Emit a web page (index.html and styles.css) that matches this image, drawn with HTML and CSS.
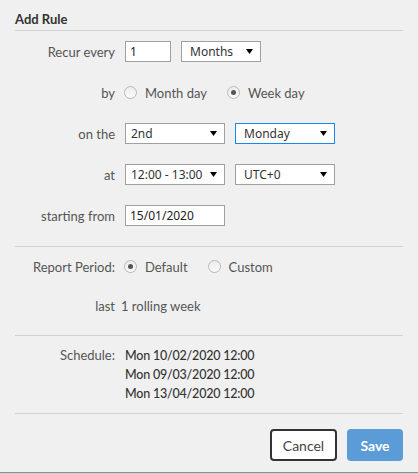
FILE: index.html
```html
<!DOCTYPE html>
<html>
<head>
<meta charset="utf-8">
<link rel="stylesheet" href="styles.css">
</head>
<body>
<div class="dialog">
  <div class="title">Add Rule</div>

  <div class="section recur">
    <div class="row">
      <div class="label">Recur every</div>
      <div class="controls">
        <div class="input small">1</div>
        <div class="select months"><span>Months</span><svg class="arrow" width="7" height="5" viewBox="0 0 7 5"><path d="M0 0H7L3.5 5Z" fill="#000"/></svg></div>
      </div>
    </div>
    <div class="row">
      <div class="label">by</div>
      <div class="controls radios">
        <label class="radio"><span class="dot"></span>Month day</label>
        <label class="radio checked"><span class="dot"></span>Week day</label>
      </div>
    </div>
    <div class="row">
      <div class="label">on the</div>
      <div class="controls">
        <div class="select wide"><span>2nd</span><svg class="arrow" width="7" height="5" viewBox="0 0 7 5"><path d="M0 0H7L3.5 5Z" fill="#000"/></svg></div>
        <div class="select wide focus"><span>Monday</span><svg class="arrow" width="7" height="5" viewBox="0 0 7 5"><path d="M0 0H7L3.5 5Z" fill="#000"/></svg></div>
      </div>
    </div>
    <div class="row">
      <div class="label">at</div>
      <div class="controls">
        <div class="select wide"><span>12:00 - 13:00</span><svg class="arrow" width="7" height="5" viewBox="0 0 7 5"><path d="M0 0H7L3.5 5Z" fill="#000"/></svg></div>
        <div class="select wide"><span>UTC+0</span><svg class="arrow" width="7" height="5" viewBox="0 0 7 5"><path d="M0 0H7L3.5 5Z" fill="#000"/></svg></div>
      </div>
    </div>
    <div class="row">
      <div class="label">starting from</div>
      <div class="controls">
        <div class="input wide">15/01/2020</div>
      </div>
    </div>
  </div>

  <div class="section report">
    <div class="row short">
      <div class="label">Report Period:</div>
      <div class="controls radios">
        <label class="radio checked"><span class="dot"></span>Default</label>
        <label class="radio"><span class="dot"></span>Custom</label>
      </div>
    </div>
    <div class="row short">
      <div class="label">last</div>
      <div class="controls text-value">1 rolling week</div>
    </div>
  </div>

  <div class="section schedule">
    <div class="sched-row">
      <div class="label">Schedule:</div>
      <div class="sched-list">
        <div>Mon 10/02/2020 12:00</div>
        <div>Mon 09/03/2020 12:00</div>
        <div>Mon 13/04/2020 12:00</div>
      </div>
    </div>
  </div>

  <div class="footer">
    <button class="btn cancel">Cancel</button>
    <button class="btn save">Save</button>
  </div>
</div>
</body>
</html>
```

FILE: styles.css
```css
html, body {
  margin: 0;
  padding: 0;
  background: #f0f0f0;
}
body {
  font-family: "Lato", "Open Sans", sans-serif;
  font-size: 13px;
  color: #555;
  height: 474px;
  overflow: hidden;
}
.dialog {
  height: 472px;
  padding: 0 15px;
  border-bottom: 2px solid;
  border-color: #cfcfcf;
  position: relative;
}
.dialog::after {
  content: "";
  position: absolute;
  left: 0;
  right: 0;
  bottom: -1px;
  height: 1px;
  background: #8f8f8f;
}
.title {
  box-sizing: border-box;
  height: 31px;
  line-height: 19px;
  padding-top: 10px;
  font-weight: bold;
  color: #333;
  border-bottom: 1px solid #d2d2d2;
}
.section {
  border-bottom: 1px solid #d2d2d2;
  display: flex;
  flex-direction: column;
}
.recur {
  padding: 10px 0 20px;
  gap: 20px;
}
.report {
  padding: 10px 0 20px;
  gap: 20px;
}
.schedule {
  padding: 10px 0 10px;
}
.row {
  display: flex;
  align-items: center;
  height: 21px;
}
.row.short {
  height: 19px;
}
.label {
  width: 100px;
  text-align: right;
  flex: none;
  margin-right: 10px;
}
.controls {
  display: flex;
  align-items: center;
  gap: 10px;
}
.input, .select {
  box-sizing: border-box;
  height: 21px;
  border: 1px solid #a0a0a0;
  background: #fff;
  font-family: "Noto Sans", "Open Sans", sans-serif;
  font-size: 12px;
  color: #222;
  display: flex;
  align-items: center;
}
.input {
  padding-left: 4px;
}
.input.small { width: 46px; }
.input.wide { width: 100px; }
.select {
  padding: 0 7px 0 8px;
  justify-content: space-between;
  color: #333;
}
.select.months { width: 80px; }
.select.wide { width: 100px; }
.select.focus {
  border-color: #1a86f0;
}
.select.wide span { white-space: nowrap; }
.select.wide:first-child { padding-left: 5px; }
.arrow { flex: none; }
.radios {
  gap: 0;
}
.radio {
  display: flex;
  align-items: center;
  margin-right: 20px;
  color: #555;
}
.radios .radio:first-child { margin-left: -1px; }
.dot {
  box-sizing: border-box;
  width: 13px;
  height: 13px;
  border-radius: 50%;
  border: 1px solid #b8b8b8;
  background: linear-gradient(#ececec, #fafafa);
  margin-right: 8px;
  display: flex;
  align-items: center;
  justify-content: center;
}
.radio.checked .dot::after {
  content: "";
  width: 5px;
  height: 5px;
  border-radius: 50%;
  background: #555;
}
.text-value {
  margin-left: -4px;
}
.sched-row {
  display: flex;
  align-items: flex-start;
  line-height: 19px;
}
.sched-list {
  color: #333;
  font-weight: 500;
  font-size: 12.5px;
  letter-spacing: -0.2px;
}
.footer {
  display: flex;
  justify-content: flex-end;
  gap: 10px;
  padding-top: 15px;
}
.btn {
  box-sizing: border-box;
  height: 32px;
  border-radius: 4px;
  font-family: "Lato", "Open Sans", sans-serif;
  font-size: 14px;
  cursor: pointer;
}
.cancel {
  width: 67px;
  background: #fff;
  border: 2px solid #333;
  color: #444;
}
.save {
  width: 56px;
  background: #5b9bd8;
  border: none;
  color: #fff;
  font-weight: bold;
}
```
